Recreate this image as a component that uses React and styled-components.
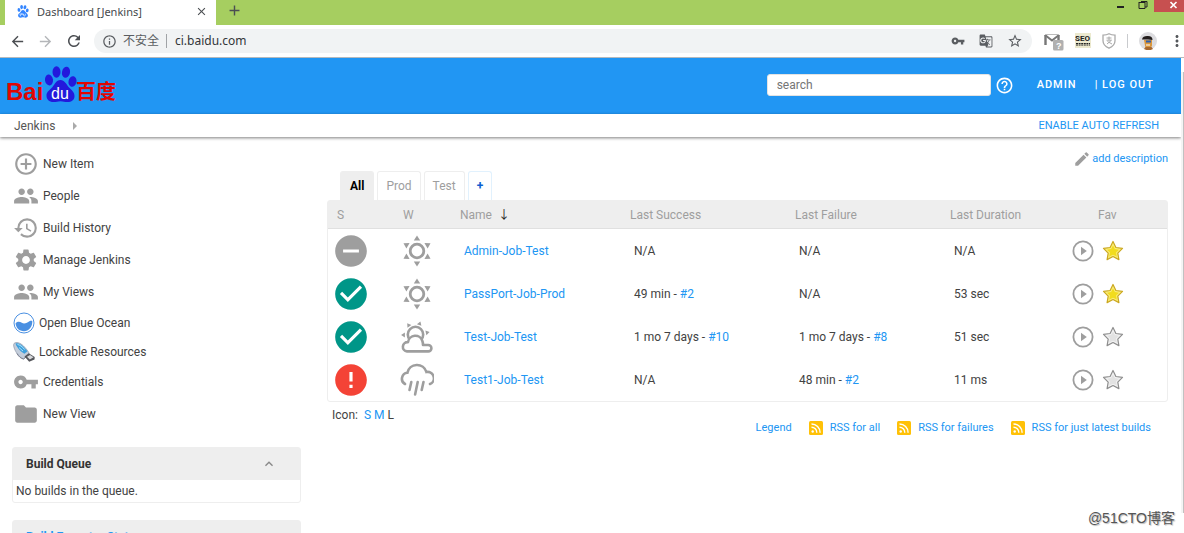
import React from "react";
import styled, { createGlobalStyle } from "styled-components";
import {
  MdAdd,
  MdAddCircleOutline,
  MdArrowBack,
  MdArrowForward,
  MdCheckCircle,
  MdClose,
  MdEdit,
  MdError,
  MdFolder,
  MdGTranslate,
  MdHelpOutline,
  MdHistory,
  MdInfoOutline,
  MdKeyboardArrowUp,
  MdMoreVert,
  MdPeople,
  MdRefresh,
  MdRemoveCircle,
  MdSettings,
  MdStarBorder,
  MdVpnKey,
} from "react-icons/md";

const menu = [
  { label: "New Item", icon: <MdAddCircleOutline /> },
  { label: "People", icon: <MdPeople /> },
  { label: "Build History", icon: <MdHistory /> },
  { label: "Manage Jenkins", icon: <MdSettings /> },
  { label: "My Views", icon: <MdPeople /> },
  { label: "Open Blue Ocean", icon: <OceanIcon />, small: true },
  { label: "Lockable Resources", icon: <UsbIcon />, small: true },
  { label: "Credentials", icon: <MdVpnKey /> },
  { label: "New View", icon: <MdFolder /> },
];

const jobs = [
  {
    name: "Admin-Job-Test",
    status: "disabled",
    weather: <SunIcon />,
    success: { text: "N/A" },
    failure: { text: "N/A" },
    duration: "N/A",
    fav: true,
  },
  {
    name: "PassPort-Job-Prod",
    status: "passed",
    weather: <SunIcon />,
    success: { text: "49 min", build: "#2" },
    failure: { text: "N/A" },
    duration: "53 sec",
    fav: true,
  },
  {
    name: "Test-Job-Test",
    status: "passed",
    weather: <CloudySunIcon />,
    success: { text: "1 mo 7 days", build: "#10" },
    failure: { text: "1 mo 7 days", build: "#8" },
    duration: "51 sec",
    fav: false,
  },
  {
    name: "Test1-Job-Test",
    status: "failed",
    weather: <RainIcon />,
    success: { text: "N/A" },
    failure: { text: "48 min", build: "#2" },
    duration: "11 ms",
    fav: false,
  },
];

const statusIcons = {
  disabled: <MdRemoveCircle />,
  passed: <MdCheckCircle />,
  failed: <MdError />,
};

const statusColors = {
  disabled: "#9e9e9e",
  passed: "#009688",
  failed: "#f44336",
};

const feeds = ["RSS for all", "RSS for failures", "RSS for just latest builds"];

function OceanIcon() {
  return (
    <svg viewBox="0 0 22 22">
      <circle cx="11" cy="11" r="10" fill="#fff" stroke="#4a90e2" />
      <path
        d="M2.600 11.200c2.200-2 4.200-1.600 6.200-.4 2.600 1.600 5.600-.2 7.600-1.600 1.200-.7 2.200-.6 2.900-.2.4 5.600-3.600 10.200-8.300 10.200-4.700 0-8.300-3.600-8.400-8z"
        fill="#4a90e2"
      />
    </svg>
  );
}

function UsbIcon() {
  return (
    <svg viewBox="0 0 22 22">
      <path
        d="M1 2.500c2-1.800 6-1 9.500 2.500 3 3 5.500 6 5.800 8.200l-5.600 4.600C7 17 3.500 12.500 2 9 .8 6.400.2 4 1 2.500z"
        fill="#c3cddb"
        stroke="#8b93a5"
        strokeWidth=".7"
      />
      <path d="M2.500 2.500c2.500-.8 6 .8 9 4.200l3 3.500-3 2.600C8 11 4 7 2.500 2.500z" fill="#3fa0dd" />
      <path d="M4.500 3.500c2 .3 5 2 7 5M6 6.500l4 3.500" stroke="#a9e3fa" fill="none" />
      <path d="M4 12.500c2 3.500 4 5 6.500 5.500l5.500-4.500" stroke="#777c8c" fill="none" />
      <path d="M11.500 15.500l4.200-3.300 6 3.800-.2 2.400-5.300 2.400z" fill="#55565b" />
      <path d="M14 15.800l3-1.800 3.500 2.200-3.700 2.200z" fill="#d8d9dc" />
    </svg>
  );
}

function SunIcon() {
  return (
    <svg viewBox="1 1 34 34" fill="currentColor">
      <circle cx="18" cy="18" r="6.800" fill="none" stroke="currentColor" strokeWidth="2.800" />
      {[0, 60, 120, 180, 240, 300].map((angle) => (
        <path key={angle} d="M18 2.400l3.200 5.200h-6.400z" transform={`rotate(${angle} 18 18)`} />
      ))}
    </svg>
  );
}

function CloudySunIcon() {
  return (
    <svg viewBox="1 1 34 34" fill="currentColor">
      <circle cx="16.500" cy="15.500" r="7.700" fill="none" stroke="currentColor" strokeWidth="2.600" />
      <path
        d="M8 32.400a4.600 4.600 0 0 1 1-9.200 7.400 7.400 0 0 1 14.400-1.200c.5 1.400.6 2.400.6 4h5.200a3.200 3.200 0 0 1 0 6.400z"
        fill="#fff"
        stroke="currentColor"
        strokeWidth="2.600"
        strokeLinejoin="round"
      />
      {[-90, -35, 20, 78].map((angle) => (
        <path key={angle} d="M16.500 1.600l2.400 3.800h-4.800z" transform={`rotate(${angle} 16.500 16)`} />
      ))}
    </svg>
  );
}

function RainIcon() {
  return (
    <svg viewBox="1 1 34 34" fill="none" stroke="currentColor" strokeWidth="2.600" strokeLinecap="round">
      <path d="M6 22a6 6 0 0 1 2.400-11.200A9.800 9.800 0 0 1 27.400 10 6.300 6.300 0 0 1 31 22" />
      <path d="M12.300 20l-1.800 8M18.700 20l-2.600 12.500M24.500 20l-1.800 8" />
    </svg>
  );
}

function PlayIcon() {
  return (
    <svg viewBox="0 0 22 22">
      <circle cx="11" cy="11" r="9.600" fill="none" stroke="#9e9e9e" strokeWidth="1.800" />
      <path d="M9 6.800v8.400l5.800-4.200z" fill="#9e9e9e" />
    </svg>
  );
}

function FavStar({ on }) {
  return (
    <svg viewBox="0 0 22 22" strokeLinejoin="round">
      <path
        d="M11 1.500l2.900 6 6.600.9-4.700 4.700 1.100 6.500-5.900-3.100-5.900 3.100 1.100-6.500L1.500 8.400l6.600-.9z"
        fill={on ? "#f9ec7a" : "#f2f2f2"}
        stroke={on ? "#cba820" : "#8e8e8e"}
        strokeWidth="1.200"
      />
      <path
        d="M11 5.500l1.900 3.600 4.100.6-3 2.900.8 4-3.800-1.900-3.800 1.900.8-4-3-2.900 4.100-.6z"
        fill={on ? "#f2dc1e" : "#e2e2e2"}
      />
    </svg>
  );
}

function RssIcon() {
  return (
    <svg viewBox="0 0 14 14">
      <rect width="14" height="14" rx="1.500" fill="#ffc107" />
      <circle cx="3.700" cy="10.500" r="1.200" fill="#fff" />
      <path d="M2.500 6.200a5.300 5.300 0 0 1 5.300 5.500M2.500 3a8.600 8.600 0 0 1 8.600 8.700" fill="none" stroke="#fff" strokeWidth="1.400" />
    </svg>
  );
}

function Paw({ color }) {
  return (
    <g fill={color}>
      <ellipse cx="5" cy="14" rx="4" ry="5.500" transform="rotate(-10 5 14)" />
      <ellipse cx="12.500" cy="6" rx="4" ry="5.800" />
      <ellipse cx="22" cy="6.300" rx="4" ry="5.600" transform="rotate(12 22 6.300)" />
      <ellipse cx="28.500" cy="15.500" rx="4" ry="5.300" transform="rotate(12 28.500 15.500)" />
      <path d="M16.500 14c4 0 5.500 4 8.500 7.500 3 3 5.500 5 5.500 8.500 0 4-3 6-7 6-3 0-4-.8-7-.8s-4 .8-7 .8c-4.500 0-7-2.500-7-6.500 0-4 3.500-5.500 6-8.500 2.500-3 3.500-7 8-7z" />
    </g>
  );
}

function BaiduLogo() {
  return (
    <svg width="112" height="40" viewBox="0 0 112 40" role="img" aria-label="Baidu">
      <LogoWord x="-1" y="35" $size={24} fill="#e10602">
        Bai
      </LogoWord>
      <g transform="translate(37 1)">
        <Paw color="#2319dc" />
      </g>
      <LogoWord x="44" y="34" $size={16} $thin fill="#fff">
        du
      </LogoWord>
      <LogoWord x="69" y="34" $size={20} fill="#e10602">
        百度
      </LogoWord>
    </svg>
  );
}

function MailIcon() {
  return (
    <svg width="20" height="20" viewBox="0 0 20 20">
      <path d="M1.500 14V4M14.500 14V4" stroke="#777" strokeWidth="2.400" />
      <path d="M1 4l7 5.500L15 4" fill="none" stroke="#777" strokeWidth="2" />
      <path d="M2 3.500h12" stroke="#bbb" />
      <rect x="9" y="9" width="10.500" height="10.500" rx="1.500" fill="#b0b0b0" />
      <text x="12" y="18" fontSize="9" fontWeight="700" fontFamily="Liberation Sans, sans-serif" fill="#fff">
        ?
      </text>
    </svg>
  );
}

function SeoIcon() {
  return (
    <svg width="16" height="16" viewBox="0 0 16 16">
      <rect width="16" height="15" fill="#ece9cf" />
      <text x="0" y="8" fontSize="8" fontWeight="700" fontFamily="Roboto, sans-serif" fill="#222">
        SEO
      </text>
      <path d="M1 10.500h14M1 12h14" stroke="#222" strokeDasharray="2 .6" />
    </svg>
  );
}

function ShieldIcon() {
  return (
    <svg width="14" height="16" viewBox="0 0 14 16" fill="none" stroke="#aaa">
      <path d="M7 .8c2 1.200 4 1.400 6 1.400v5.600c0 3.800-2.800 6-6 7.400-3.200-1.400-6-3.600-6-7.400V2.200c2 0 4-.2 6-1.400z" strokeWidth="1.300" />
      <path d="M4.500 5h5M7 3.500V7M4.500 7.200h5L5 11M5.500 8.500L10 11" />
    </svg>
  );
}

function Avatar() {
  return (
    <svg width="18" height="18" viewBox="0 0 18 18">
      <circle cx="9" cy="9" r="9" fill="#dcdcdf" />
      <path d="M5 8h8v5.500c0 1.500-2 2.500-4 2.500s-3-1-3-2.500z" fill="#d9953b" />
      <path d="M3 7.500C3.500 4.500 6 3.800 9 4c3 0 4.500 1.500 4.500 4L9 7.500z" fill="#221d1c" />
      <path d="M7 9.500h5" stroke="#2d5fb0" strokeWidth="2" />
      <path d="M7 13h4" stroke="#fff" />
      <path d="M5 17l1.500-2h6L14 17a9 9 0 0 1-9 0z" fill="#a8682e" />
    </svg>
  );
}

function Run({ run }) {
  return (
    <>
      {run.text}
      {run.build && (
        <>
          {" - "}
          <Link href="#">{run.build}</Link>
        </>
      )}
    </>
  );
}

function BrowserChrome() {
  return (
    <>
      <TabStrip>
        <BrowserTab>
          <svg width="12" height="13" viewBox="0 0 33 37">
            <Paw color="#3385ff" />
            <path d="M11 31a3 3 0 1 1 3-3v-5M18 25v4c0 3 5 3 5 0v-4" fill="none" stroke="#fff" strokeWidth="2" />
          </svg>
          <TabTitle>Dashboard [Jenkins]</TabTitle>
          <ChromeButton aria-label="Close tab" $size={13}>
            <MdClose />
          </ChromeButton>
        </BrowserTab>
        <NewTabButton aria-label="New tab" $size={17}>
          <MdAdd />
        </NewTabButton>
        <WindowButtons>
          <WindowButton aria-label="Minimize">
            <svg width="8" height="10" viewBox="0 0 8 10">
              <path d="M0 6h7" stroke="#222" strokeWidth="2" />
            </svg>
          </WindowButton>
          <WindowButton aria-label="Restore">
            <svg width="10" height="10" viewBox="0 0 10 10" fill="none" stroke="#222">
              <path d="M1 1v6.500h6V1M1 1.500h6M3 .5h6V6H7" />
            </svg>
          </WindowButton>
          <WindowButton aria-label="Close" $close>
            <svg width="8" height="10" viewBox="0 0 8 10">
              <path d="M.5 1l6 6M6.500 1l-6 6" stroke="#fff" strokeWidth="1.600" />
            </svg>
          </WindowButton>
        </WindowButtons>
      </TabStrip>
      <Toolbar>
        <ChromeButton aria-label="Back" $size={17}>
          <MdArrowBack />
        </ChromeButton>
        <ChromeButton aria-label="Forward" $size={17} $muted>
          <MdArrowForward />
        </ChromeButton>
        <ChromeButton aria-label="Reload" $size={18}>
          <MdRefresh />
        </ChromeButton>
        <AddressBar>
          <MdInfoOutline size={15} />
          <Insecure>不安全</Insecure>
          <Address>ci.baidu.com</Address>
          <MdVpnKey size={14} />
          <MdGTranslate size={14} />
          <MdStarBorder size={16} />
        </AddressBar>
        <Extensions>
          <MailIcon />
          <SeoIcon />
          <ShieldIcon />
          <Divider />
          <Avatar />
          <MdMoreVert size={18} />
        </Extensions>
      </Toolbar>
    </>
  );
}

function Sidebar() {
  return (
    <SidebarStyled>
      <nav>
        {menu.map((item) => (
          <MenuItem href="#" key={item.label} $small={item.small}>
            {item.icon}
            {item.label}
          </MenuItem>
        ))}
      </nav>
      <Panel>
        <PanelHead>
          Build Queue
          <CollapseButton aria-label="Collapse build queue">
            <MdKeyboardArrowUp />
          </CollapseButton>
        </PanelHead>
        <PanelBody>No builds in the queue.</PanelBody>
      </Panel>
      <Panel>
        <PanelHead>
          <Link href="#">Build Executor Status</Link>
          <CollapseButton aria-label="Collapse executor status">
            <MdKeyboardArrowUp />
          </CollapseButton>
        </PanelHead>
      </Panel>
    </SidebarStyled>
  );
}

function JobTable() {
  return (
    <Table>
      <colgroup>
        <Col $width={66} />
        <Col $width={57} />
        <Col $width={170} />
        <Col $width={165} />
        <Col />
        <Col $width={122} />
        <Col $width={26} />
        <Col $width={78} />
      </colgroup>
      <thead>
        <tr>
          <Th>S</Th>
          <Th>W</Th>
          <Th>
            Name <SortArrow>↓</SortArrow>
          </Th>
          <Th>Last Success</Th>
          <Th>Last Failure</Th>
          <Th>Last Duration</Th>
          <Th />
          <Th>Fav</Th>
        </tr>
      </thead>
      <tbody>
        {jobs.map((job) => (
          <tr key={job.name}>
            <IconCell>
              <StatusIcon $color={statusColors[job.status]}>{statusIcons[job.status]}</StatusIcon>
            </IconCell>
            <IconCell>
              <WeatherIcon>{job.weather}</WeatherIcon>
            </IconCell>
            <Td>
              <Link href="#">{job.name}</Link>
            </Td>
            <Td>
              <Run run={job.success} />
            </Td>
            <Td>
              <Run run={job.failure} />
            </Td>
            <Td>{job.duration}</Td>
            <ActionCell>
              <RowButton aria-label={`Build ${job.name}`}>
                <PlayIcon />
              </RowButton>
            </ActionCell>
            <Td>
              <RowButton aria-label={`Favorite ${job.name}`}>
                <FavStar on={job.fav} />
              </RowButton>
            </Td>
          </tr>
        ))}
      </tbody>
    </Table>
  );
}

function App() {
  return (
    <>
      <GlobalStyle />
      <Window>
        <BrowserChrome />
        <Viewport>
          <Page>
            <Header>
              <BaiduLogo />
              <Search type="text" placeholder="search" aria-label="search" />
              <HelpLink href="#" aria-label="Help">
                <MdHelpOutline />
              </HelpLink>
              <HeaderLink href="#">ADMIN</HeaderLink>
              <HeaderLogout>
                | <HeaderLink href="#">LOG OUT</HeaderLink>
              </HeaderLogout>
            </Header>
            <Breadcrumbs>
              <Crumb href="#">Jenkins</Crumb>
              <CrumbArrow />
              <RefreshLink href="#">ENABLE AUTO REFRESH</RefreshLink>
            </Breadcrumbs>
            <Body>
              <Sidebar />
              <Main>
                <Description>
                  <MdEdit />
                  <Link href="#">add description</Link>
                </Description>
                <ViewTabs>
                  <ViewTab href="#" $active>
                    All
                  </ViewTab>
                  <ViewTab href="#">Prod</ViewTab>
                  <ViewTab href="#">Test</ViewTab>
                  <ViewTab href="#" $add>
                    +
                  </ViewTab>
                </ViewTabs>
                <JobTable />
                <Footer>
                  <IconSizes>
                    Icon:{" "}
                    <SizeList>
                      <Link href="#">S</Link> <Link href="#">M</Link> L
                    </SizeList>
                  </IconSizes>
                  <Feeds>
                    <Link href="#">Legend</Link>
                    {feeds.map((feed) => (
                      <FeedLink href="#" key={feed}>
                        <RssIcon />
                        {feed}
                      </FeedLink>
                    ))}
                  </Feeds>
                </Footer>
              </Main>
            </Body>
          </Page>
          <Scrollbar />
        </Viewport>
        <Watermark>@51CTO博客</Watermark>
      </Window>
    </>
  );
}

const GlobalStyle = createGlobalStyle`
  * {
    box-sizing: border-box;
  }

  body {
    margin: 0;
    font-family: Roboto, "Noto Sans CJK SC", sans-serif;
    font-size: 12px;
    line-height: 16px;
    color: #424242;
  }

  a {
    text-decoration: none;
  }

  button {
    display: flex;
    align-items: center;
    padding: 0;
    border: 0;
    background: none;
  }

  svg {
    display: block;
    flex: none;
  }
`;

const Window = styled.div`
  position: relative;
  display: flex;
  flex-direction: column;
  height: 100vh;
  overflow: hidden;
  background: #fff;
`;

/* browser frame */

const TabStrip = styled.div`
  display: flex;
  height: 25px;
  padding-left: 5px;
  background: #a6ce60;
`;

const BrowserTab = styled.div`
  display: flex;
  align-items: center;
  width: 211px;
  padding: 0 8px 2px 12px;
  background: #fff;
`;

const TabTitle = styled.span`
  flex: 1;
  margin-left: 8px;
  font-family: "Noto Sans", sans-serif;
  font-size: 11px;
  color: #45494d;
`;

const ChromeButton = styled.button`
  color: ${(props) => (props.$muted ? "#b4b6b9" : "#4b4e52")};
  font-size: ${(props) => props.$size}px;
`;

const NewTabButton = styled(ChromeButton)`
  margin-left: 10px;
  padding-bottom: 4px;
`;

const WindowButtons = styled.div`
  display: flex;
  align-items: flex-start;
  margin-left: auto;
`;

const WindowButton = styled.button`
  justify-content: ${(props) => (props.$close ? "flex-end" : "center")};
  width: ${(props) => (props.$close ? 30 : 22)}px;
  height: 12px;
  padding-right: ${(props) => (props.$close ? 6 : 0)}px;
  background: ${(props) => (props.$close ? "#c75050" : "none")};
`;

const Toolbar = styled.div`
  display: flex;
  align-items: center;
  gap: 11px;
  height: 33px;
  padding-left: 9px;
  border-bottom: 1px solid #b5b9bd;
`;

const AddressBar = styled.div`
  display: flex;
  flex: 1;
  align-items: center;
  gap: 14px;
  height: 24px;
  padding: 0 9px 0 8px;
  border-radius: 12px;
  background: #f1f3f4;
  color: #5a5d61;
`;

const Insecure = styled.span`
  margin-left: -8px;
  padding-right: 7px;
  border-right: 1px solid #a0a3a6;
  font-size: 12px;
  line-height: 14px;
`;

const Address = styled.span`
  flex: 1;
  margin-left: -6px;
  font-family: "Noto Sans", sans-serif;
  font-size: 12px;
  color: #333639;
`;

const Extensions = styled.div`
  display: flex;
  align-items: center;
  gap: 11px;
  margin-left: 1px;
  margin-right: -2px;
  color: #55585c;
`;

const Divider = styled.span`
  width: 1px;
  height: 14px;
  background: #c9cbce;
`;

/* jenkins page */

const Viewport = styled.div`
  display: flex;
  flex: 1;
  min-height: 0;
`;

const Page = styled.div`
  flex: 1;
  min-width: 0;
  overflow: hidden;
`;

const Scrollbar = styled.div`
  width: 3px;
  margin: 14px 0 20px;
  border-left: 2px solid #f4f4f4;
  background: #c1c1c1;
`;

const Link = styled.a`
  color: #2196f3;
`;

const Header = styled.header`
  display: flex;
  align-items: center;
  height: 56px;
  padding: 0 27px 2px 7px;
  background: #2196f3;
  color: #fff;
  font-weight: 500;
  letter-spacing: 1px;
`;

const LogoWord = styled.text`
  font-family: "Liberation Sans", "Noto Sans CJK SC", sans-serif;
  font-size: ${(props) => props.$size}px;
  font-weight: ${(props) => (props.$thin ? 400 : 700)};
  letter-spacing: 0;
`;

const Search = styled.input`
  width: 224px;
  height: 22px;
  margin-left: auto;
  padding: 0 9px;
  border: 1px solid #e3e3e3;
  border-radius: 3px;
  background: #fff;
  font-family: inherit;
  font-size: 12px;

  &::placeholder {
    color: #757575;
  }
`;

const HelpLink = styled.a`
  margin: 0 23px 0 4px;
  color: #fff;
  font-size: 19px;
`;

const HeaderLink = styled.a`
  color: #fff;
  font-size: 11px;
`;

const HeaderLogout = styled.span`
  margin-left: 18px;
  font-size: 11px;
`;

const Breadcrumbs = styled.nav`
  display: flex;
  align-items: center;
  height: 23px;
  padding: 0 22px 0 14px;
  box-shadow: 0 1px 3px rgba(0, 0, 0, 0.5);
`;

const Crumb = styled.a`
  color: #555;
`;

const CrumbArrow = styled.span`
  margin-left: 18px;
  border: 4px solid transparent;
  border-left-color: #aaa;
  border-right: 0;
`;

const RefreshLink = styled(Link)`
  margin-left: auto;
  font-size: 11px;
`;

const Body = styled.div`
  display: flex;
`;

const SidebarStyled = styled.aside`
  width: 301px;
  padding: 11px 0 0 12px;
`;

const MenuItem = styled.a`
  display: flex;
  align-items: center;
  gap: 4px;
  height: ${(props) => (props.$small ? 29 : 32)}px;
  padding-left: 1px;
  color: #424242;

  svg {
    width: ${(props) => (props.$small ? 22 : 26)}px;
    height: ${(props) => (props.$small ? 22 : 26)}px;
    color: #9e9e9e;
  }
`;

const Panel = styled.section`
  margin-top: 17px;
  border: 1px solid #eee;
  border-radius: 3px;
`;

const PanelHead = styled.h2`
  display: flex;
  align-items: center;
  justify-content: space-between;
  height: 32px;
  margin: 0;
  padding: 0 23px 0 13px;
  background: #eee;
  font-size: 12px;
  font-weight: 700;
  color: #333;
`;

const CollapseButton = styled.button`
  color: #888;
  font-size: 16px;
`;

const PanelBody = styled.div`
  padding: 3px;
`;

const Main = styled.main`
  flex: 1;
  min-width: 0;
  padding: 13px 13px 0 26px;
`;

const Description = styled.div`
  display: flex;
  align-items: center;
  justify-content: flex-end;
  gap: 1px;
  font-size: 11px;

  svg {
    color: #9e9e9e;
    font-size: 18px;
  }
`;

const ViewTabs = styled.nav`
  display: flex;
  gap: 3px;
  padding: 3px 13px 0;
`;

const ViewTab = styled.a`
  height: 29px;
  padding: 6px ${(props) => (props.$active ? 9 : 8)}px;
  border: 1px solid ${(props) => (props.$add ? "#e1f1fd" : "#eee")};
  border-bottom: 0;
  border-radius: 3px 3px 0 0;
  background: ${(props) => (props.$active ? "#eee" : "#fff")};
  color: ${(props) => (props.$active ? "#000" : props.$add ? "#0d5fd0" : "#9e9e9e")};
  font-weight: ${(props) => (props.$active || props.$add ? 700 : 400)};
`;

const Table = styled.table`
  width: 100%;
  table-layout: fixed;
  border: 1px solid #eee;
  border-radius: 3px;
  border-spacing: 0;
`;

const Col = styled.col`
  width: ${(props) => (props.$width ? `${props.$width}px` : "auto")};
`;

const Th = styled.th`
  height: 28px;
  padding: 0 0 0 9px;
  border-bottom: 1px solid #e0e0e0;
  background: #eee;
  color: #9e9e9e;
  font-weight: 400;
  text-align: left;
`;

const SortArrow = styled.span`
  margin-left: 3px;
  color: #222;
`;

const Td = styled.td`
  height: 43px;
  padding: 0 0 0 13px;
`;

const IconCell = styled(Td)`
  padding-left: 6px;
`;

const ActionCell = styled(Td)`
  padding-left: 9px;
`;

const StatusIcon = styled.span`
  color: ${(props) => props.$color};
  font-size: 38px;

  svg {
    margin-left: -2px;
  }
`;

const WeatherIcon = styled.span`
  color: #9e9e9e;

  svg {
    width: 34px;
    height: 34px;
  }
`;

const RowButton = styled.button`
  svg {
    width: 22px;
    height: 22px;
  }
`;

const Footer = styled.div`
  display: flex;
  justify-content: space-between;
  padding: 5px 17px 0 5px;
`;

const IconSizes = styled.div`
  flex: none;
`;

const SizeList = styled.span`
  margin-left: 3px;
`;

const Feeds = styled.div`
  display: flex;
  gap: 17px;
  padding-top: 13px;
  font-size: 11px;
`;

const FeedLink = styled(Link)`
  display: flex;
  align-items: center;
  gap: 7px;

  svg {
    width: 14px;
    height: 14px;
  }
`;

const Watermark = styled.div`
  position: absolute;
  right: 9px;
  bottom: 5px;
  font-family: "Liberation Sans", "Noto Sans CJK SC", sans-serif;
  font-size: 14px;
  line-height: 20px;
  color: #555;
  text-shadow: 1px 1px 1px #bbb;
`;

export default App;
